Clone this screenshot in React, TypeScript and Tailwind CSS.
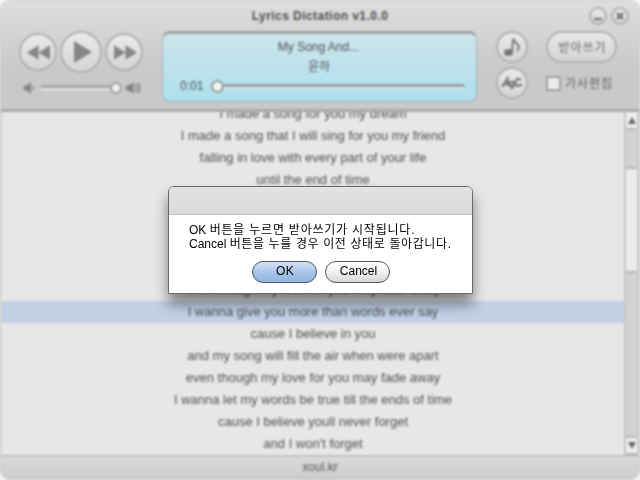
import React from "react";

const lyrics: string[] = [
  "I made a song for you my dream",
  "I made a song that I will sing for you my friend",
  "falling in love with every part of your life",
  "until the end of time",
  "",
  "",
  "",
  "",
  "even though my love for you may fade away",
  "I wanna give you more than words ever say",
  "cause I believe in you",
  "and my song will fill the air when were apart",
  "even though my love for you may fade away",
  "I wanna let my words be true till the ends of time",
  "cause I believe youll never forget",
  "and I won't forget",
];

const CURRENT_LINE = 9;

function RoundButton({ className, children }: { className: string; children: React.ReactNode }) {
  return (
    <div
      className={`flex shrink-0 items-center justify-center rounded-full border-2 border-[#b0b0b0] bg-linear-to-b from-[#eaeaea] to-[#d5d5d5] ${className}`}
    >
      {children}
    </div>
  );
}

function Playback() {
  return (
    <div className="w-[143px] pl-[19px]">
      <div className="flex h-[42px] items-center gap-[3px]">
        <RoundButton className="size-[38px]">
          <svg width="23" height="15" viewBox="0 0 22 14" fill="#868686">
            <path d="M11 0v14L0 7zM22 0v14L11 7z" />
          </svg>
        </RoundButton>
        <RoundButton className="size-[42px]">
          <svg width="18" height="22" viewBox="0 0 18 22" fill="#868686" className="ml-[4px]">
            <path d="M0 0l18 11L0 22z" />
          </svg>
        </RoundButton>
        <RoundButton className="size-[38px]">
          <svg width="23" height="15" viewBox="0 0 22 14" fill="#868686" className="ml-[2px]">
            <path d="M0 0l11 7L0 14zM11 0l11 7l-11 7z" />
          </svg>
        </RoundButton>
      </div>
      <div className="mt-[9px] flex h-[12px] items-center pl-[4px]">
        <svg width="12" height="12" viewBox="0 0 12 12" fill="#868686">
          <path d="M0.500 3.500h3L8 0v12L3.500 8.500h-3z" />
          <path d="M9.500 4q1.500 2 0 4" fill="none" stroke="#949494" strokeWidth="1.500" />
        </svg>
        <div className="ml-[5px] flex h-[12px] w-[82px] items-center">
          <div className="h-[6px] w-[70px] rounded-l-full border-t-3 border-[#a8a8a8] bg-[#dedede]" />
          <div className="size-[12px] shrink-0 rounded-full border-2 border-[#9c9c9c] bg-[#f2f2f2]" />
        </div>
        <svg width="15" height="12" viewBox="0 0 15 12" fill="#808080" className="ml-[4px]">
          <path d="M0 3.500h3L7.500 0v12L3 8.500H0z" />
          <path d="M9.300 2q2.600 4 0 8M12 1q3.500 5 0 10" fill="none" stroke="#808080" strokeWidth="1.600" />
        </svg>
      </div>
    </div>
  );
}

function Display() {
  return (
    <div className="h-[71px] w-[315px] rounded-[8px] border border-t-3 border-[#a4b2b6] border-t-[#9ca4a7] bg-linear-to-b from-[#cde5ec] to-[#ade0ee] text-center text-[12px] text-[#525759]">
      <div className="mt-[5px] h-[16px] pr-[2px] leading-[16px]">My Song And...</div>
      <div className="mt-[4px] h-[16px] pr-px leading-[16px]">윤하</div>
      <div className="mt-[4px] flex h-[14px] items-center pl-[17px]">
        <span className="w-[31px] text-left leading-[14px]">0:01</span>
        <span className="size-[13px] shrink-0 rounded-full border-2 border-[#909a9e] bg-[#f3f3f3]" />
        <span className="h-[5px] w-[241px] rounded-r-full border-t-3 border-[#989fa2] bg-[#dfe6e9]" />
      </div>
    </div>
  );
}

function Tools() {
  return (
    <div className="flex pl-[19px]">
      <div className="flex flex-col gap-[4px]">
        <RoundButton className="size-[32px]">
          <svg width="18" height="20" viewBox="0 0 18 20">
            <ellipse cx="5.500" cy="15.500" rx="4.500" ry="3.500" fill="#777" />
            <path d="M8.800 15.500L10.300 1.500q.7 3 3.500 5q3.500 3 .5 7.500" fill="none" stroke="#777" strokeWidth="2" />
          </svg>
        </RoundButton>
        <RoundButton className="size-[32px]">
          <svg width="22" height="14" viewBox="0 0 22 14" fill="none" stroke="#797979" strokeWidth="2.200" className="shrink-0">
            <path d="M1 11L6.500 2.500L7.500 10M3 8h5" />
            <path d="M12.500 6q-4-1-4 2t3.500 1.500L13 5.500q0 7-3.500 6.500" />
            <path d="M20 4q-3-2.500-5 .5t0 4.500q2 1.500 6-.5" />
          </svg>
        </RoundButton>
      </div>
      <div className="pl-[18px] text-[12px] text-[#636363]">
        <div className="flex h-[32px] w-[71px] items-center justify-center rounded-full border-2 border-[#b0b0b0] bg-linear-to-b from-[#e8e8e8] to-[#d4d4d4] pt-[2px] pl-[2px] leading-[16px] tracking-[1px]">
          받아쓰기
        </div>
        <div className="mt-[12px] flex h-[16px] items-center">
          <span className="size-[15px] shrink-0 border-2 border-[#a0a0a0] bg-[#ebebeb]" />
          <span className="ml-[4px] pt-[2px] leading-[16px] tracking-[1px]">가사편집</span>
        </div>
      </div>
    </div>
  );
}

function Scrollbar() {
  return (
    <div className="flex w-[15px] shrink-0 flex-col border-x-2 border-[#c4c4c4] border-r-[#cecece] bg-[#d2d2d2]">
      <div className="flex h-[18px] items-center justify-center border-b-2 border-[#b6b6b6] bg-[#eee]">
        <svg width="8" height="7" viewBox="0 0 8 7" fill="#6a6a6a">
          <path d="M4 0l4 7H0z" />
        </svg>
      </div>
      <div className="h-[37px]" />
      <div className="h-[106px] border-y-2 border-[#b6b6b6] bg-[#ebebeb]" />
      <div className="flex-1" />
      <div className="flex h-[19px] items-center justify-center border-y-2 border-[#b6b6b6] bg-[#eee]">
        <svg width="8" height="7" viewBox="0 0 8 7" fill="#666">
          <path d="M0 0h8L4 7z" />
        </svg>
      </div>
    </div>
  );
}

function Dialog() {
  return (
    <div className="absolute top-[186px] left-[168px] h-[108px] w-[305px] rounded-t-[6px] border border-[#666b68] bg-white text-[12px] text-black shadow-[0_10px_14px_rgba(0,0,0,0.45)]">
      <div className="h-[28px] rounded-t-[5px] border-b border-[#c0c0c0] bg-linear-to-b from-[#e3e3e3] to-[#dadada]" />
      <div className="h-[46px] pt-[8px] pl-[20px] whitespace-nowrap">
        <div className="h-[14px] leading-[14px]">
          OK <span className="tracking-[0.78px]">버튼을 누르면 받아쓰기가 시작됩니다.</span>
        </div>
        <div className="h-[14px] leading-[14px]">
          Cancel <span className="tracking-[0.62px]">버튼을 누를 경우 이전 상태로 돌아갑니다.</span>
        </div>
      </div>
      <div className="flex gap-[8px] pl-[83px]">
        <button className="h-[22px] w-[65px] rounded-full border border-[#4c5665] bg-linear-to-b from-[#d5e2f3] via-[#a9c5e8] to-[#92b6df] pb-[2px] pl-px leading-[18px] tracking-[0.3px]">
          OK
        </button>
        <button className="h-[22px] w-[65px] rounded-full border border-[#585858] bg-linear-to-b from-white via-[#f1f1f1] to-[#d7d7d7] pb-[2px] pl-[2px] leading-[18px]">
          Cancel
        </button>
      </div>
    </div>
  );
}

export default function App() {
  return (
    <div className="relative h-[480px] w-[640px] overflow-hidden bg-[#f4f4f4] font-['Liberation_Sans','Noto_Sans_CJK_KR',sans-serif]">
      <div className="h-[480px] w-[640px] filter-[blur(0.8px)]">
        <div className="flex h-[480px] w-[640px] flex-col overflow-hidden rounded-[10px] border border-[#c0c0c0] bg-[#e7e7e7]">
          <header className="h-[111px] shrink-0 border-b-3 border-[#aaaaaa] bg-linear-to-b from-[#dedede] to-[#c9c9c9] to-65%">
            <div className="grid h-[30px] grid-cols-[1fr_auto_1fr] items-center">
              <span />
              <h1 className="text-[12px] font-bold tracking-[0.45px] text-[#515151]">Lyrics Dictation v1.0.0</h1>
              <div className="flex justify-end gap-[4px] pr-[10px]">
                <RoundButton className="size-[18px]">
                  <span className="mt-[5px] h-[2px] w-[8px] bg-[#6c6c6c]" />
                </RoundButton>
                <RoundButton className="size-[18px]">
                  <svg width="8" height="8" viewBox="0 0 8 8" stroke="#6c6c6c" strokeWidth="2.400">
                    <path d="M1 1l6 6M7 1L1 7" />
                  </svg>
                </RoundButton>
              </div>
            </div>
            <div className="-ml-px flex">
              <Playback />
              <div className="pl-[19px]">
                <Display />
              </div>
              <Tools />
            </div>
          </header>
          <main className="flex min-h-0 flex-1">
            <div className="min-w-0 flex-1 overflow-hidden border-l border-[#d8d8d8]">
              <div className="-mt-[9px]">
                {lyrics.map((line, i) => (
                  <div
                    key={i}
                    className={`h-[22px] text-center text-[13px] leading-[22px] text-[#515151] ${
                      i === CURRENT_LINE ? "bg-[#c1d0e6]" : ""
                    }`}
                  >
                    {line}
                  </div>
                ))}
              </div>
            </div>
            <Scrollbar />
          </main>
          <footer className="h-[24px] shrink-0 border-t-2 border-[#c2c2c2] bg-linear-to-b from-[#dadada] to-[#cccccc] text-center text-[12px] leading-[21px] text-[#5e5e5e]">
            xoul.kr
          </footer>
        </div>
      </div>
      <Dialog />
    </div>
  );
}
